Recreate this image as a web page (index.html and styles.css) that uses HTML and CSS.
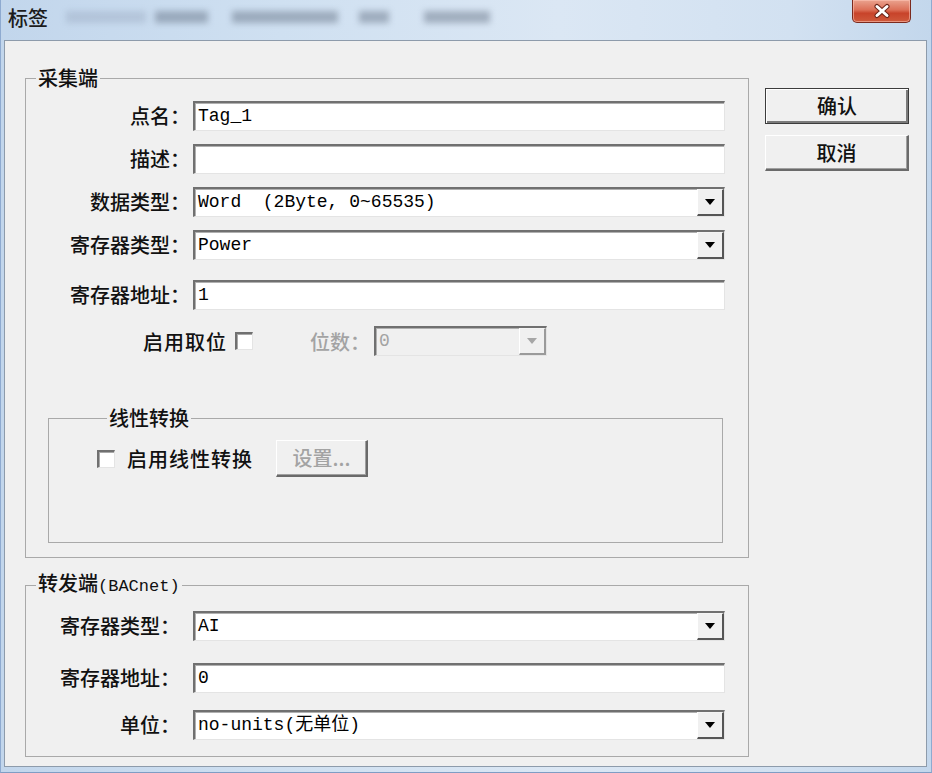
FILE: index.html
```html
<!DOCTYPE html>
<html lang="zh-CN">
<head>
<meta charset="utf-8">
<title>标签</title>
<link rel="stylesheet" href="styles.css">
</head>
<body>
<div class="window">
  <div class="titlebar">
    <span class="title">标签</span>
    <div class="ghost">
      <i class="g g1"></i><i class="g g2"></i><i class="g g3"></i><i class="g g4"></i><i class="g g5"></i>
    </div>
    <div class="close">
      <svg width="20" height="16" viewBox="0 0 20 16">
        <path d="M5 3.5L15 12.5M15 3.5L5 12.5" stroke="#6a2418" stroke-width="5" stroke-linecap="round"/>
        <path d="M5 3.5L15 12.5M15 3.5L5 12.5" stroke="#ffffff" stroke-width="3" stroke-linecap="round"/>
      </svg>
    </div>
  </div>
  <div class="client">
    <div class="main-col">
      <fieldset class="group group-collect">
        <legend>采集端</legend>
        <div class="rows">
          <div class="row"><span class="lbl">点名：</span><div class="field">Tag_1</div></div>
          <div class="row"><span class="lbl">描述：</span><div class="field"></div></div>
          <div class="row"><span class="lbl">数据类型：</span><div class="field select"><span class="val">Word&nbsp;&nbsp;(2Byte, 0~65535)</span><span class="drop"><i class="tri"></i></span></div></div>
          <div class="row"><span class="lbl">寄存器类型：</span><div class="field select"><span class="val">Power</span><span class="drop"><i class="tri"></i></span></div></div>
          <div class="row row-addr"><span class="lbl">寄存器地址：</span><div class="field">1</div></div>
        </div>
        <div class="bit-row">
          <span class="bit-lbl">启用取位</span>
          <span class="check"></span>
          <span class="bit-count">位数：</span>
          <div class="field select disabled bit-select"><span class="val">0</span><span class="drop"><i class="tri"></i></span></div>
        </div>
        <fieldset class="group group-linear">
          <legend>线性转换</legend>
          <div class="linear-row">
            <span class="check"></span>
            <span class="linear-lbl">启用线性转换</span>
            <span class="btn btn-disabled btn-set">设置...</span>
          </div>
        </fieldset>
      </fieldset>
      <fieldset class="group group-forward">
        <legend>转发端<span class="latin">(BACnet)</span></legend>
        <div class="rows rows-forward">
          <div class="row"><span class="lbl">寄存器类型：</span><div class="field select"><span class="val">AI</span><span class="drop"><i class="tri"></i></span></div></div>
          <div class="row"><span class="lbl">寄存器地址：</span><div class="field">0</div></div>
          <div class="row"><span class="lbl">单位：</span><div class="field select"><span class="val">no-units(无单位)</span><span class="drop"><i class="tri"></i></span></div></div>
        </div>
      </fieldset>
    </div>
    <div class="btn-col">
      <span class="btn btn-default">确认</span>
      <span class="btn">取消</span>
    </div>
  </div>
</div>
</body>
</html>
```

FILE: styles.css
```css
* { box-sizing: border-box; }
html, body { margin: 0; padding: 0; }
body {
  width: 932px;
  height: 773px;
  overflow: hidden;
  font-family: "Noto Sans CJK SC", "Noto Sans", sans-serif;
  font-weight: 500;
  color: #111;
  background: #c9dbee;
}
.window {
  width: 932px;
  height: 773px;
  display: flex;
  flex-direction: column;
  background: linear-gradient(90deg, #c2d6ec 0%, #cfe0f1 30%, #dbe7f4 60%, #d2e1f1 85%, #c3d7ec 100%);
  border-left: 1px solid #8eaad0;
  border-right: 1px solid #8eaad0;
  border-bottom: 1px solid #7f9dc4;
}
.titlebar {
  height: 40px;
  flex: none;
  display: flex;
  align-items: flex-start;
}
.title {
  font-size: 20px;
  line-height: 24px;
  margin: 6px 0 0 7px;
  color: #1c1c1c;
}
.ghost {
  display: flex;
  align-items: center;
  margin: 10px 0 0 18px;
  height: 14px;
  filter: blur(3px);
}
.g { display: block; height: 12px; background: rgba(80, 92, 112, 0.4); }
.g1 { width: 80px; background: rgba(110, 125, 150, 0.22); }
.g2 { width: 53px; margin-left: 9px; }
.g3 { width: 106px; margin-left: 24px; }
.g4 { width: 30px; margin-left: 21px; }
.g5 { width: 66px; margin-left: 35px; }
.close {
  margin-left: auto;
  margin-right: 20px;
  width: 59px;
  height: 23px;
  border: 1px solid #7b2a1e;
  border-top: none;
  border-radius: 0 0 5px 5px;
  background: linear-gradient(180deg, #eaa38f 0%, #dc6f57 45%, #c8432a 60%, #cf5a3c 100%);
  box-shadow: inset 0 0 0 1px rgba(255, 200, 185, 0.55);
  display: flex;
  align-items: center;
  justify-content: center;
}
.client {
  flex: 1;
  margin: 0 4px 5px 3px;
  background: #f0f0f0;
  border: 1px solid #8d9bab;
  display: flex;
  align-items: flex-start;
  padding: 25px 16px 0 20px;
  gap: 16px;
}
.main-col {
  width: 724px;
  flex: none;
  display: flex;
  flex-direction: column;
}
.group {
  margin: 0;
  padding: 0;
  border: 1px solid #a9a9a9;
  min-width: 0;
}
.group legend {
  margin-left: 10px;
  padding: 0 2px;
  font-size: 20px;
  line-height: 24px;
}
.latin {
  font-family: "Liberation Mono", monospace;
  font-size: 17px;
  font-weight: 400;
}
.group-collect { padding: 11px 0 14px 0; }
.group-forward { margin-top: 13px; padding: 12px 0 16px 0; }
.rows { display: flex; flex-direction: column; gap: 13px; }
.rows-forward { gap: 22px; }
.rows-forward .row:last-child { margin-top: -5px; }
.row { display: flex; align-items: center; height: 30px; }
.row-addr { margin-top: 7px; }
.lbl {
  width: 164px;
  margin-right: 3px;
  text-align: right;
  font-size: 20px;
  line-height: 30px;
  white-space: nowrap;
}
.rows-forward .lbl { width: 154px; margin-right: 13px; }
.field {
  width: 532px;
  height: 30px;
  background: #fff;
  border-top: 2px solid #707070;
  border-left: 2px solid #707070;
  border-right: 1px solid #e4e4e4;
  border-bottom: 1px solid #e4e4e4;
  box-shadow: inset 1px 1px 0 #b0b0b0;
  padding-left: 3px;
  font-family: "Liberation Mono", "Noto Sans CJK SC", monospace;
  font-weight: 400;
  color: #000;
  font-size: 18px;
  line-height: 27px;
  white-space: pre;
  display: flex;
  align-items: center;
}
.select .val { flex: 1; }
.drop {
  width: 27px;
  height: 100%;
  flex: none;
  background: #f0f0f0;
  border-top: 1px solid #f4f4f4;
  border-left: 1px solid #fff;
  border-right: 2px solid #555;
  border-bottom: 2px solid #555;
  display: flex;
  align-items: center;
  justify-content: center;
}
.tri {
  display: block;
  width: 0;
  height: 0;
  border-left: 5px solid transparent;
  border-right: 5px solid transparent;
  border-top: 6px solid #000;
}
.disabled { background: #f0f0f0; color: #a3a3a3; }
.disabled .drop { border-right-color: #9a9a9a; border-bottom-color: #9a9a9a; }
.disabled .tri { border-top-color: #a6a6a6; }
.bit-row {
  display: flex;
  align-items: center;
  height: 30px;
  margin-top: 16px;
  padding-left: 117px;
}
.bit-lbl { font-size: 20px; letter-spacing: 1px; }
.check {
  width: 18px;
  height: 18px;
  flex: none;
  background: #fff;
  border-top: 2px solid #707070;
  border-left: 2px solid #707070;
  border-right: 1px solid #e4e4e4;
  border-bottom: 1px solid #e4e4e4;
  box-shadow: inset 1px 1px 0 #a8a8a8;
}
.bit-row .check { margin-left: 8px; }
.bit-count { margin-left: 57px; font-size: 20px; color: #a3a3a3; }
.bit-select { width: 173px; margin-left: 4px; }
.group-linear {
  margin: 50px 25px 0 22px;
  padding: 10px 0 65px 48px;
}
.linear-row { display: flex; align-items: center; height: 37px; }
.linear-lbl { margin-left: 12px; font-size: 20px; letter-spacing: 1px; }
.btn {
  display: flex;
  align-items: center;
  justify-content: center;
  height: 36px;
  width: 144px;
  background: #f0f0f0;
  border-top: 1px solid #fff;
  border-left: 1px solid #fff;
  border-right: 2px solid #6a6a6a;
  border-bottom: 2px solid #6a6a6a;
  box-shadow: inset -1px -1px 0 #a0a0a0;
  font-size: 20px;
  line-height: 24px;
}
.btn-default {
  border: 1px solid #3c3c3c;
  box-shadow: inset 1px 1px 0 #fff, inset -2px -2px 0 #7a7a7a;
}
.btn-col {
  display: flex;
  flex-direction: column;
  gap: 11px;
  margin-top: 22px;
}
.btn-set {
  width: 92px;
  height: 37px;
  margin-left: 23px;
}
.btn-disabled { color: #a3a3a3; }
```
